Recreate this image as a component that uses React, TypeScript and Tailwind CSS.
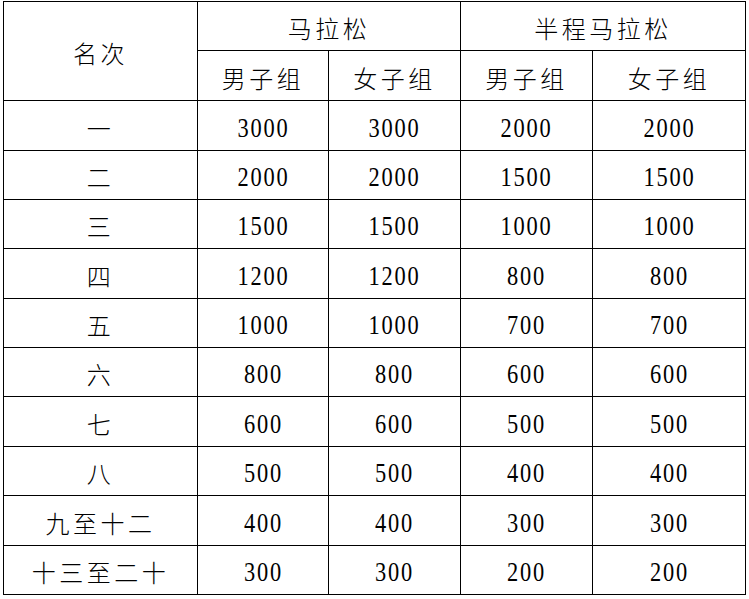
const cn = "font-['Noto_Sans_CJK_SC',sans-serif] font-light text-[24px] tracking-[3.5px]"
const num = "font-['Liberation_Serif',serif] text-[28px] tracking-[2.25px]"

const rows: [string, string, string, string, string][] = [
  ["一", "3000", "3000", "2000", "2000"],
  ["二", "2000", "2000", "1500", "1500"],
  ["三", "1500", "1500", "1000", "1000"],
  ["四", "1200", "1200", "800", "800"],
  ["五", "1000", "1000", "700", "700"],
  ["六", "800", "800", "600", "600"],
  ["七", "600", "600", "500", "500"],
  ["八", "500", "500", "400", "400"],
  ["九至十二", "400", "400", "300", "300"],
  ["十三至二十", "300", "300", "200", "200"],
]

function Cell({ children, className = "" }: { children: React.ReactNode; className?: string }) {
  return (
    <div className={`flex items-center justify-center bg-white pt-[4px] leading-none text-black ${className}`}>
      {children}
    </div>
  )
}

function Num({ value }: { value: string }) {
  return (
    <Cell className={num}>
      <span className="inline-block scale-x-80">{value}</span>
    </Cell>
  )
}

export default function App() {
  return (
    <div className="h-[599px] w-[749px] bg-white pl-[3px] pt-[1px]">
      <div className="grid w-[743px] grid-cols-[193px_130px_131px_131px_152px] grid-rows-[48px_49px_49px_48px_48px_49px_48px_48px_49px_48px_49px_48px] gap-px border border-black bg-black">
        <Cell className={`row-span-2 ${cn}`}>名次</Cell>
        <Cell className={`col-span-2 ${cn}`}>马拉松</Cell>
        <Cell className={`col-span-2 ${cn}`}>半程马拉松</Cell>
        <Cell className={cn}>男子组</Cell>
        <Cell className={cn}>女子组</Cell>
        <Cell className={cn}>男子组</Cell>
        <Cell className={cn}>女子组</Cell>
        {rows.map((r) => (
          <div key={r[0]} className="contents">
            <Cell className={cn}>{r[0]}</Cell>
            <Num value={r[1]} />
            <Num value={r[2]} />
            <Num value={r[3]} />
            <Num value={r[4]} />
          </div>
        ))}
      </div>
    </div>
  )
}
